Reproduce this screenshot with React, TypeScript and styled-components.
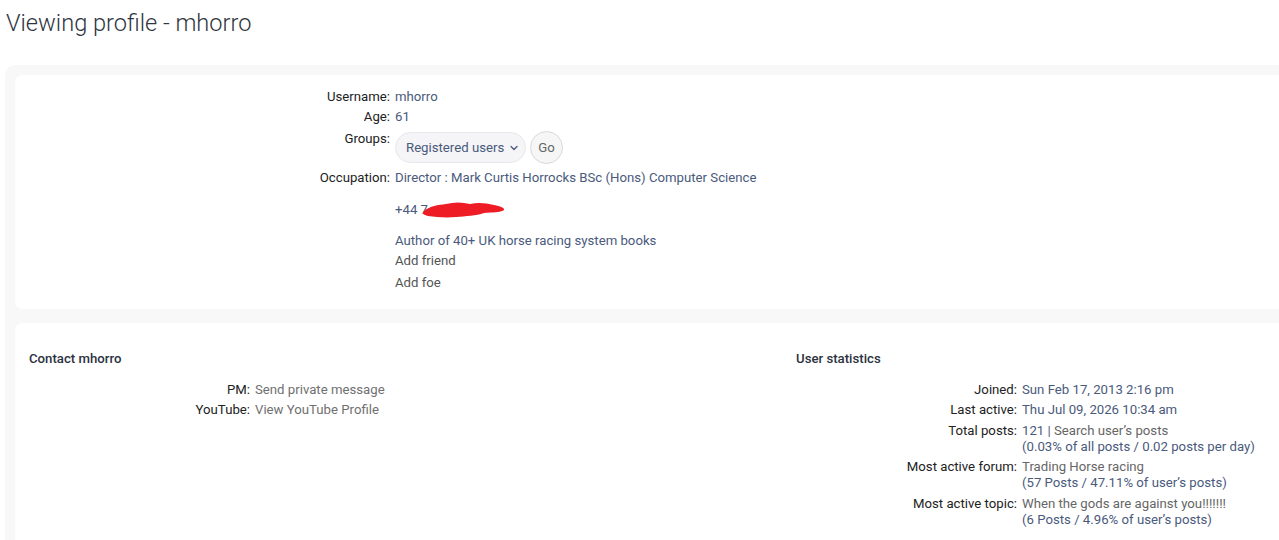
import styled, { createGlobalStyle } from "styled-components";
import { ChevronDown } from "lucide-react";

const GlobalStyle = createGlobalStyle`
    html, body {
        margin: 0;
        padding: 0;
        background: #ffffff;
        overflow: hidden;
    }
    body {
        font-family: Roboto, "Liberation Sans", sans-serif;
        font-size: 13.2px;
        color: #222;
    }
`;

const Page = styled.div`
    width: 1700px;
    padding: 0 0 0 5px;
`;

const Title = styled.h2`
    margin: 0 0 0 1px;
    padding-top: 7px;
    height: 58px;
    font-size: 23.6px;
    font-weight: 300;
    line-height: 32px;
    color: #2f3440;
`;

const Panel = styled.div`
    background: #f8f8f8;
    border-radius: 10px;
    padding: 10px 0 14px 10px;
    display: flex;
    flex-direction: column;
    gap: 14px;
`;

const Box = styled.div<{ $pad: string }>`
    background: #ffffff;
    border-radius: 8px;
    padding: ${(p) => p.$pad};
`;

const Columns = styled.div`
    display: grid;
    grid-template-columns: 767px 1fr;
`;

const Heading = styled.h3`
    margin: 0 0 15px 0;
    font-size: 13.2px;
    font-weight: 500;
    line-height: 16px;
    color: #2b3240;
`;

const List = styled.dl<{ $indent: number }>`
    margin: 0 0 0 ${(p) => p.$indent}px;
    display: grid;
    grid-template-columns: 221px 1fr;
    column-gap: 5px;
    row-gap: 4px;
    line-height: 16px;
`;

const Label = styled.dt<{ $top?: number }>`
    margin: 0;
    margin-top: ${(p) => p.$top ?? 0}px;
    text-align: right;
    color: #222;
    white-space: nowrap;
`;

const Value = styled.dd<{ $top?: number; $tone?: "link" | "grey" | "dark" }>`
    margin: 0;
    margin-top: ${(p) => p.$top ?? 0}px;
    white-space: nowrap;
    color: ${(p) =>
        p.$tone === "grey" ? "#707070" : p.$tone === "dark" ? "#555555" : "#4a5a7c"};
`;

const Muted = styled.span`
    color: #666666;
`;

const GroupRow = styled.div`
    display: flex;
    align-items: center;
    gap: 4px;
    margin-top: 2px;
`;

const SelectWrap = styled.div`
    position: relative;
    display: inline-flex;
`;

const Select = styled.select`
    appearance: none;
    height: 31px;
    width: 131px;
    padding: 0 20px 0 10px;
    border: 1px solid #e8e8ec;
    border-radius: 16px;
    background: #f5f5f7;
    font-family: Roboto, "Liberation Sans", sans-serif;
    font-size: 13.2px;
    color: #4a5a7c;
`;

const Caret = styled(ChevronDown)`
    position: absolute;
    right: 6px;
    top: 10px;
    pointer-events: none;
    color: #4a5a7c;
`;

const GoButton = styled.button`
    width: 33px;
    height: 33px;
    border: 1px solid #d9d9d9;
    border-radius: 50%;
    background: #f6f6f6;
    font-family: Roboto, "Liberation Sans", sans-serif;
    font-size: 13.2px;
    color: #666;
    padding: 0;
`;

const Phone = styled.span`
    display: inline-flex;
    align-items: center;
`;

function Scribble() {
    return (
        <svg width="84" height="18" viewBox="0 0 84 18" style={{ marginLeft: -6 }}>
            <path
                d="M2 10 C8 5 16 4 24 3 C32 1 40 1 48 3 C56 1 64 2 72 4 C78 5 83 7 82 9 C78 12 70 11 62 12 C54 15 44 15 34 16 C24 17 14 16 6 15 C1 14 0 12 2 10 Z"
                fill="#ee1c25"
            />
        </svg>
    );
}

export default function App() {
    return (
        <>
            <GlobalStyle />
            <Page>
                <Title>Viewing profile - mhorro</Title>
                <Panel>
                    <Box $pad="14px 0 18px 0">
                        <List $indent={154}>
                            <Label>Username:</Label>
                            <Value>mhorro</Value>
                            <Label>Age:</Label>
                            <Value>61</Value>
                            <Label $top={2}>Groups:</Label>
                            <Value>
                                <GroupRow>
                                    <SelectWrap>
                                        <Select defaultValue="reg">
                                            <option value="reg">Registered users</option>
                                        </Select>
                                        <Caret size={12} strokeWidth={2.5} />
                                    </SelectWrap>
                                    <GoButton>Go</GoButton>
                                </GroupRow>
                            </Value>
                            <Label $top={2}>Occupation:</Label>
                            <Value $top={2}>Director : Mark Curtis Horrocks BSc (Hons) Computer Science</Value>
                            <Label />
                            <Value $top={11}>
                                <Phone>
                                    +44 7
                                    <Scribble />
                                </Phone>
                            </Value>
                            <Label />
                            <Value $top={10}>Author of 40+ UK horse racing system books</Value>
                            <Label />
                            <Value $tone="dark">Add friend</Value>
                            <Label />
                            <Value $tone="dark" $top={2}>Add foe</Value>
                        </List>
                    </Box>
                    <Box $pad="28px 0 40px 14px">
                        <Columns>
                            <div>
                                <Heading>Contact mhorro</Heading>
                                <List $indent={0}>
                                    <Label>PM:</Label>
                                    <Value $tone="grey">Send private message</Value>
                                    <Label>YouTube:</Label>
                                    <Value $tone="grey">View YouTube Profile</Value>
                                </List>
                            </div>
                            <div>
                                <Heading>User statistics</Heading>
                                <List $indent={0}>
                                    <Label>Joined:</Label>
                                    <Value>Sun Feb 17, 2013 2:16 pm</Value>
                                    <Label>Last active:</Label>
                                    <Value>Thu Jul 09, 2026 10:34 am</Value>
                                    <Label $top={1}>Total posts:</Label>
                                    <Value $top={1}>
                                        121 | <Muted>Search user’s posts</Muted>
                                        <br />
                                        (0.03% of all posts / 0.02 posts per day)
                                    </Value>
                                    <Label>Most active forum:</Label>
                                    <Value>
                                        <Muted>Trading Horse racing</Muted>
                                        <br />
                                        (57 Posts / 47.11% of user’s posts)
                                    </Value>
                                    <Label $top={1}>Most active topic:</Label>
                                    <Value $top={1}>
                                        <Muted>When the gods are against you!!!!!!!</Muted>
                                        <br />
                                        (6 Posts / 4.96% of user’s posts)
                                    </Value>
                                </List>
                            </div>
                        </Columns>
                    </Box>
                </Panel>
            </Page>
        </>
    );
}
